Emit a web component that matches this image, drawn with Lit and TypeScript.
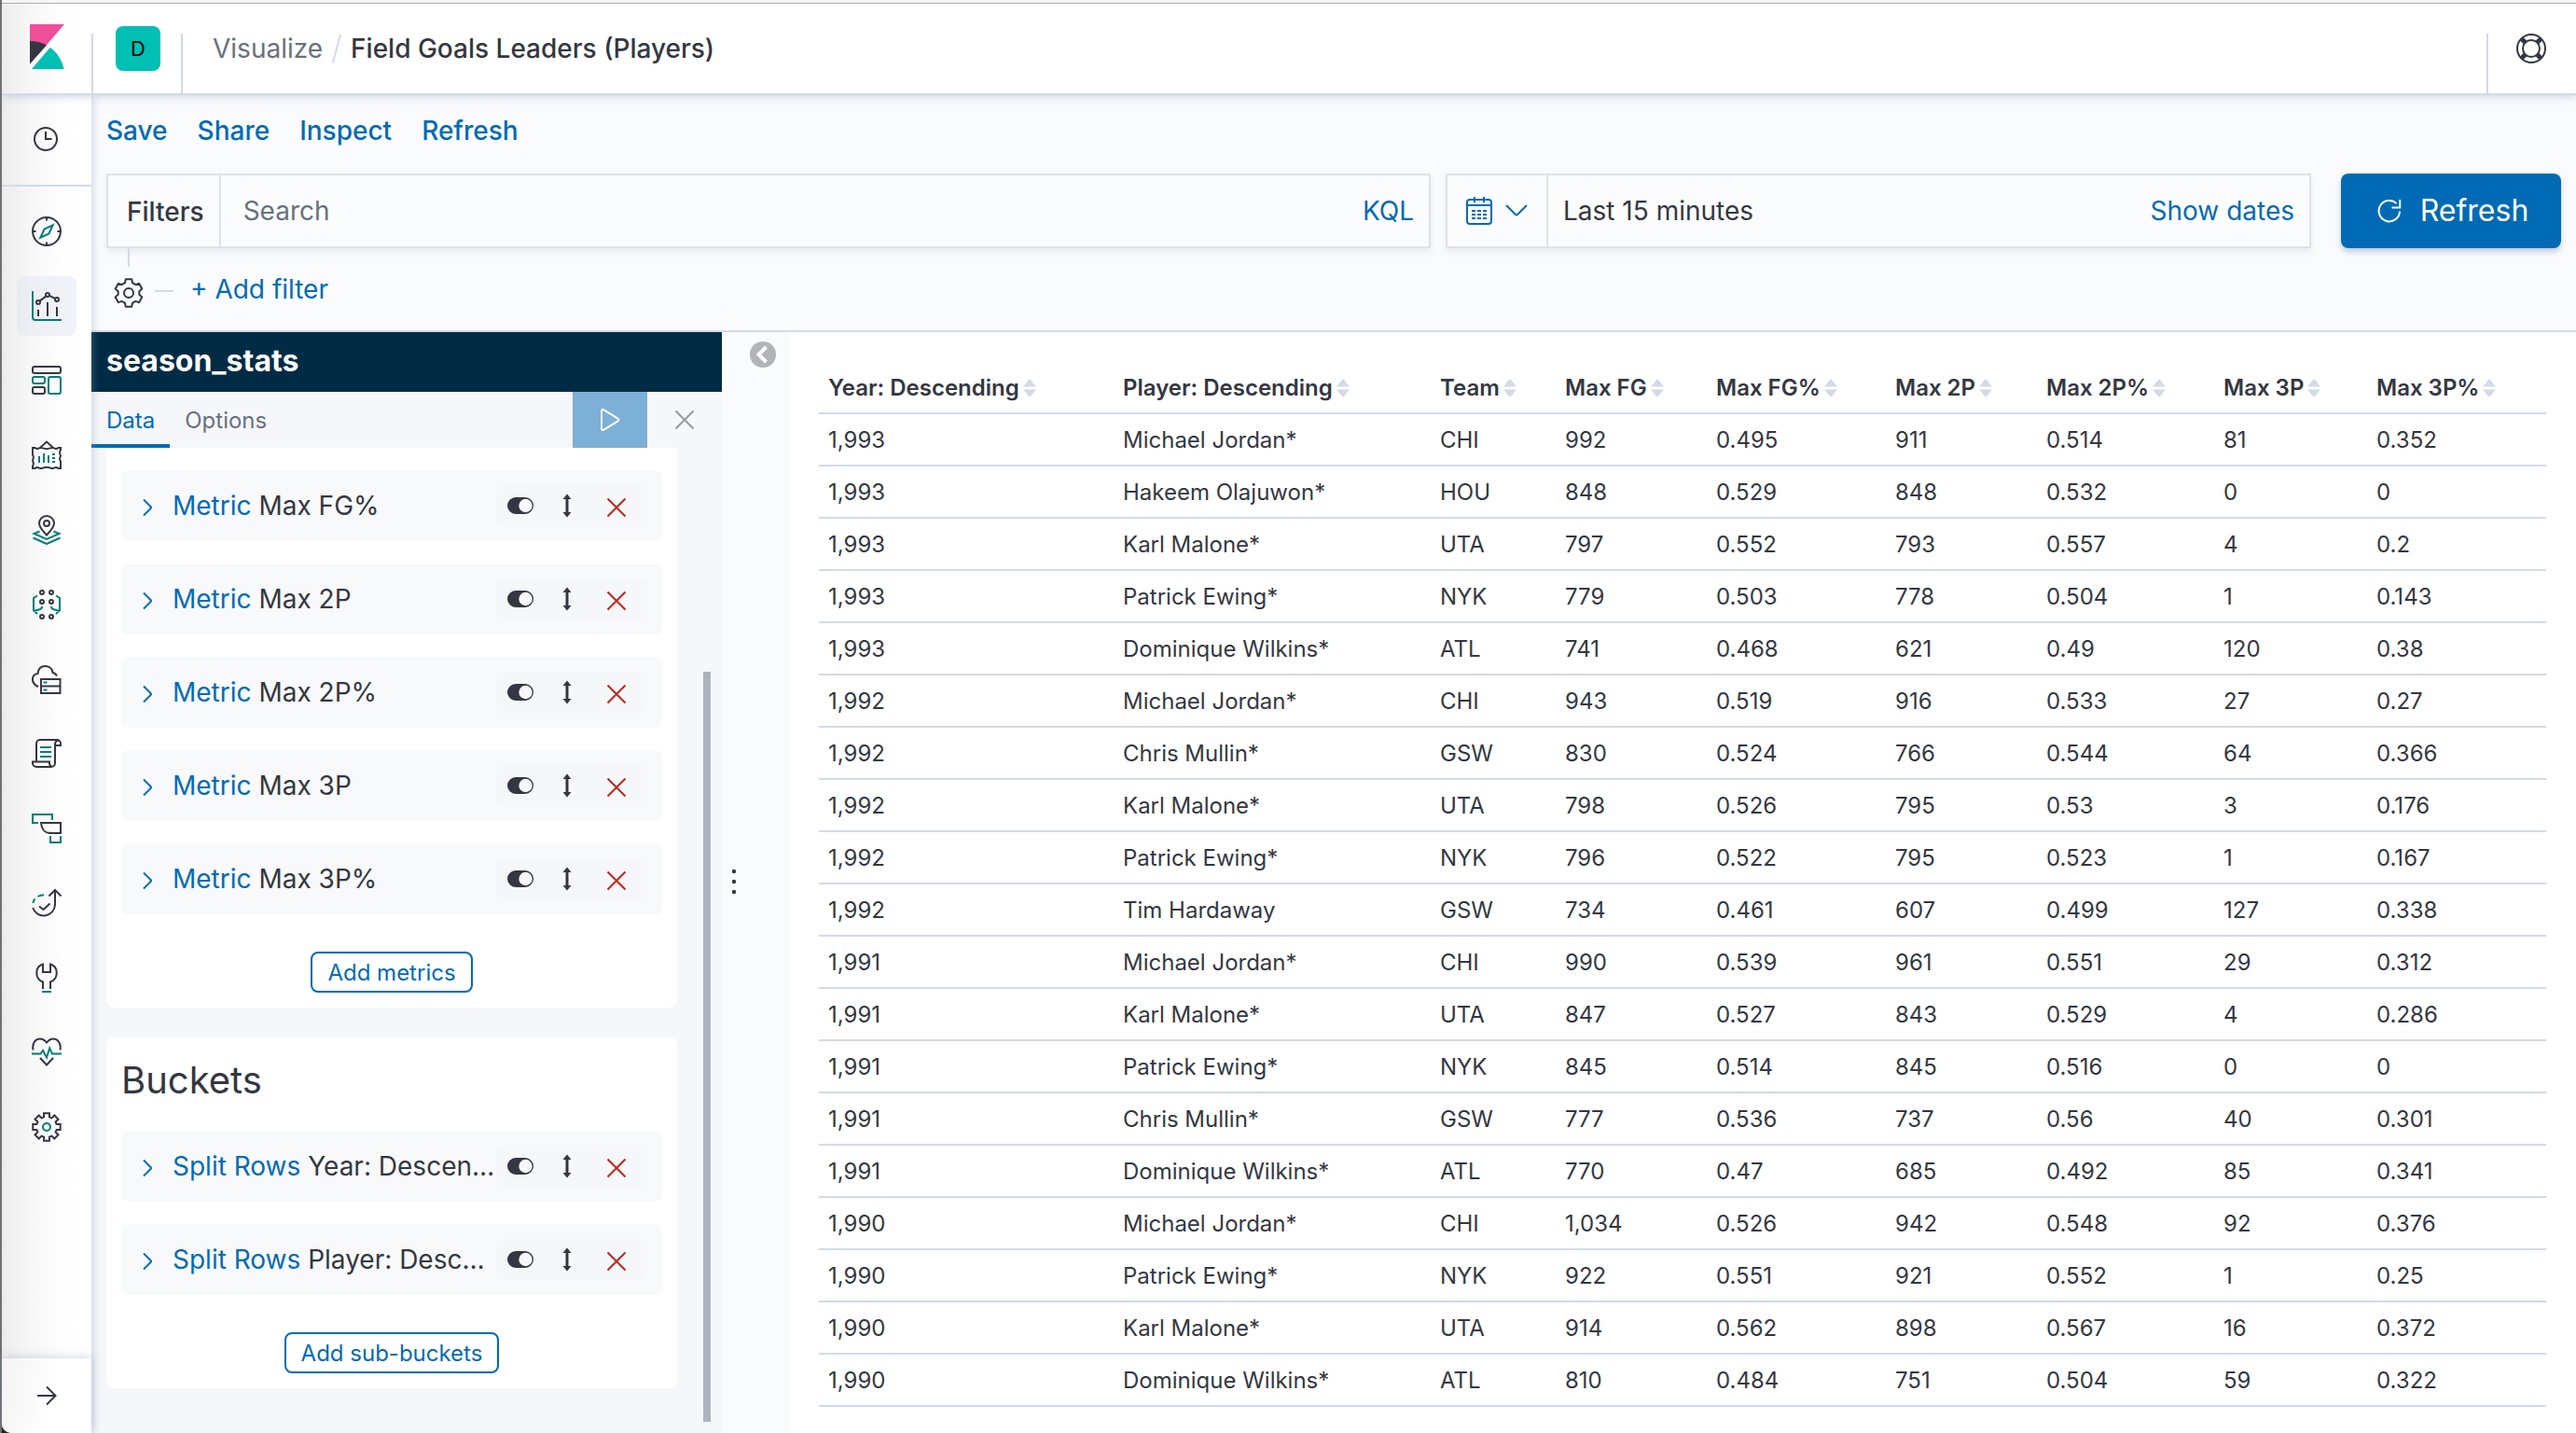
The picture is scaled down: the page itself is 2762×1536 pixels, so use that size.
import { LitElement, html, css, svg, nothing } from "lit";
import { customElement, property, state } from "lit/decorators.js";
import { classMap } from "lit/directives/class-map.js";

/** Outline of a cog: `teeth` blocks between an inner and an outer radius. */
function cog(teeth: number, c: number, outer: number, inner: number, top: number, foot: number): string {
  const points: string[] = [];
  const at = (r: number, a: number) =>
    `${(c + r * Math.sin(a)).toFixed(2)} ${(c - r * Math.cos(a)).toFixed(2)}`;
  for (let i = 0; i < teeth; i++) {
    const a = (i * 2 * Math.PI) / teeth;
    points.push(at(inner, a - foot), at(outer, a - top), at(outer, a + top), at(inner, a + foot));
  }
  return `M${points.join("L")}Z`;
}

const ink = "#343741";
const teal = "#017d73";

const icons: Record<string, { box: string; body: unknown }> = {
  kibana: {
    box: "0 0 37 48",
    body: svg`<g stroke="none"><path fill="#f04e98" d="M0 0h37L0 43z"/><path fill="#343741" d="M0 18c6.500 0 12.800 1.600 18 4.500L0 43z"/><path fill="#00bfb3" d="M21.700 25c7.500 5.300 13 13.500 14.800 23H2z"/><path stroke="#fbfbfb" stroke-width="2.500" d="M0 44.500 23 19"/></g>`,
  },
  clock: {
    box: "0 0 26 26",
    body: svg`<circle cx="13" cy="13" r="12"/><path d="M13 5v8h6.500"/>`,
  },
  discover: {
    box: "0 0 32 32",
    body: svg`<circle cx="16" cy="16" r="15"/><path d="M16 1v3.500M16 27.500V31M1 16h3.500M27.500 16H31"/><path stroke=${teal} d="M22.600 9.400 13.600 13.600 9.400 22.600 18.400 18.400z"/>`,
  },
  visualize: {
    box: "0 0 32 32",
    body: svg`<path stroke=${teal} d="M1 0v28a3 3 0 0 0 3 3h28"/><path d="M7 20v7M17 12v15M27 17v10M8.600 10.600l6.600-5M19 4.800l6.200 3.300"/><circle cx="7" cy="12" r="2"/><circle cx="17" cy="4" r="2"/><circle cx="27" cy="9" r="2"/>`,
  },
  dashboard: {
    box: "0 0 32 32",
    body: svg`<rect x="1" y="1" width="30" height="7" rx="2"/><rect x="1" y="23" width="13" height="7" rx="2"/><g stroke=${teal}><rect x="1" y="12" width="13" height="7" rx="2"/><rect x="18" y="12" width="13" height="18" rx="2"/></g>`,
  },
  canvas: {
    box: "0 0 32 32",
    body: svg`<path d="M9 8l7-6.500L23 8"/><path d="M1 8h2.500c1.500 1.200 3 1.200 4.500.4 1.400-.6 2.600-.6 4 0 2.700 1 5.300 1 8 0 1.400-.6 2.600-.6 4 0 1.500.8 3 .8 4.500-.4H31v2.500c-1.100 1.500-1.100 2.800-.5 4.300.5 1.100.5 2.300 0 3.400-.6 1.500-.6 2.800.5 4.300 .2 2.500 0 5 0 7.500h-2.500c-1.500-1.200-3-1.200-4.500-.4-1.400.6-2.600.6-4 0-2.700-1-5.300-1-8 0-1.400.6-2.600.6-4 0-1.500-.8-3-.8-4.500.4H1v-2.500c1.100-1.500 1.100-2.800.5-4.300-.5-1.100-.5-2.300 0-3.400.6-1.500.6-2.800-.5-4.300-.2-2.500 0-5 0-7.500z"/><path stroke=${teal} d="M8 17v7M13 14v10M18 16v8M22 15h3M22 19h3M22 23h3"/>`,
  },
  maps: {
    box: "0 0 32 32",
    body: svg`<path d="M16 21.500C12.500 17.500 8 13.500 8 9a8 8 0 0 1 16 0c0 4.500-4.500 8.500-8 12.500z"/><circle cx="16" cy="9" r="3"/><path stroke=${teal} d="M8.500 17.500 2.500 20 16 26l13.500-6-6-2.500M1.500 24.500 16 31l14.500-6.500"/>`,
  },
  ml: {
    box: "0 0 32 32",
    body: svg`<circle cx="11" cy="3" r="2"/><circle cx="21" cy="3" r="2"/><circle cx="11" cy="13" r="2"/><circle cx="21" cy="13" r="2"/><circle cx="11" cy="29" r="2"/><circle cx="21" cy="29" r="2"/><path stroke=${teal} d="M6 6.500 2 9v13l4 4M2 23l7-2c1.500-.5 2-1.300 2-3M26 6.500 30 9v13l-4 4M30 23l-7-2c-1.500-.5-2-1.300-2-3"/>`,
  },
  infra: {
    box: "0 0 32 32",
    body: svg`<path d="M7 24C-1.500 20-.5 11 6.500 10 7 4.500 10.500 2 14.500 2s7.500 2.500 8 7c2 .3 3.500 1.500 4.500 3.500"/><path d="M10 16h20.500v15H10zM10 23.500h20.500"/><path stroke=${teal} d="M12.500 19.500h4M12.500 27.500h4"/>`,
  },
  logs: {
    box: "0 0 32 32",
    body: svg`<path d="M5 24V5a4 4 0 0 1 4-4h18a4 4 0 0 1 4 4v2h-6"/><path d="M29 1.500a4 4 0 0 0-4 4V26a4 4 0 0 1-4 4H5a4 4 0 0 1-4-4v-1.500h18V26c0 2 1 3.500 3 4"/><path stroke=${teal} d="M9 9h12M9 14h12M9 19h12"/>`,
  },
  apm: {
    box: "0 0 32 32",
    body: svg`<path stroke=${teal} d="M7 10H1V1h21v6M20 24v7h11v-7"/><path d="M10 10h21v11H20c-6 0-9.500-4.500-10-11z"/>`,
  },
  uptime: {
    box: "0 0 32 32",
    body: svg`<path d="M1.200 21A12.200 12.200 0 0 0 25 18V2M18.500 8.500 25 2l6.500 6.500M8 19.500l4.500 3.500 7-6.500"/><path stroke=${teal} d="M1.300 16c.4-1.800 1.200-3.300 2.200-4.600M6.500 9c2-1.200 4-1.800 6.500-1.800"/>`,
  },
  dev: {
    box: "0 0 32 32",
    body: svg`<path d="M12 28v-7.500C3 17.500 3 4 12 1.500V10h8V1.500c9 2.500 9 16 0 19V28"/><path stroke=${teal} d="M11 31h10"/>`,
  },
  monitoring: {
    box: "0 0 32 32",
    body: svg`<path d="M1.500 13.500C0 5 5 1.500 9 1.500c3 0 5 1.500 7 4 2-2.500 4-4 7-4 4 0 9 3.500 7.500 12M9 22l7 7.500 7-7.500"/><path stroke=${teal} d="M0 17.500h9.500l2.500-3.500 4 7.500 3.200-10 2.800 6H32"/>`,
  },
  management: {
    box: "0 0 32 32",
    body: svg`<path d=${cog(8, 16, 15, 11, 0.2, 0.27)}/><circle stroke=${teal} cx="16" cy="16" r="4"/>`,
  },
  arrow: {
    box: "0 0 22 22",
    body: svg`<path d="M1 11h19M11 1.500l9.500 9.500L11 20.500"/>`,
  },
  help: {
    box: "0 0 32 32",
    body: svg`<circle cx="16" cy="16" r="15"/><circle cx="16" cy="16" r="9"/><path stroke-width="5" d="M5.800 5.800l4 4M26.200 5.800l-4 4M5.800 26.200l4-4M26.200 26.200l-4-4"/>`,
  },
  gear: {
    box: "0 0 32 32",
    body: svg`<path stroke-linejoin="round" d=${cog(6, 16, 15, 11.5, 0.22, 0.36)}/><circle cx="16" cy="16" r="5"/>`,
  },
  calendar: {
    box: "0 0 28 30",
    body: svg`<rect x="1" y="3" width="26" height="26" rx="3"/><path d="M1 9h26M9 0v6M19 0v6"/><path stroke-dasharray="4 2" d="M6 15h16M6 19h16M6 23h16"/>`,
  },
  down: { box: "0 0 24 24", body: svg`<path d="M1 6l10 10q1 1 2 0L23 6"/>` },
  right: { box: "0 0 24 24", body: svg`<path d="M9 5.500l7.500 7.500q1 1 0 2L9 22.500"/>` },
  reload: {
    box: "0 0 26 26",
    body: svg`<path d="M20.500 5A11.200 11.200 0 1 0 24 13.500M24.200 1v8.500h-8.700"/>`,
  },
  play: {
    box: "0 0 24 26",
    body: svg`<path stroke-linejoin="round" d="M3 3.500v19c0 1.500 1.300 2 2.500 1.200l15-9.300c1-.7 1-2 0-2.700l-15-9.400C4.300 1.500 3 2 3 3.500z"/>`,
  },
  cross: { box: "0 0 22 22", body: svg`<path d="M1.500 1.500l19 19M20.500 1.500l-19 19"/>` },
  toggle: {
    box: "0 0 28 18",
    body: svg`<rect x="1" y="1" width="26" height="16" rx="8" fill=${ink}/><circle cx="19.500" cy="9" r="7.200" fill="#f5f7fa" stroke="none"/>`,
  },
  updown: {
    box: "0 0 12 26",
    body: svg`<path stroke-width="3" d="M6 4v18"/><path stroke="none" fill="currentColor" d="M6 .5l4.500 5.500h-9zM6 25.500l4.500-5.500h-9z"/>`,
  },
  collapse: {
    box: "0 0 28 28",
    body: svg`<circle cx="14" cy="14" r="14" fill="#b2b4b8" stroke="none"/><path stroke="#fff" stroke-width="4" d="M17.500 6 9.500 14l8 8"/>`,
  },
  sort: {
    box: "0 0 14 20",
    body: svg`<path stroke="none" fill="#d3dae6" d="M7 0l7 8.500H0zM7 20l7-8.500H0z"/>`,
  },
  dots: {
    box: "0 0 6 28",
    body: svg`<g fill="currentColor" stroke="none"><circle cx="3" cy="3" r="2.200"/><circle cx="3" cy="14" r="2.200"/><circle cx="3" cy="25" r="2.200"/></g>`,
  },
};

const base = css`
  * {
    box-sizing: border-box;
  }
  button,
  input {
    font: inherit;
    color: inherit;
    background: none;
    border: 0;
    padding: 0;
    margin: 0;
    border-radius: 0;
    outline-offset: -2px;
  }
  button {
    cursor: pointer;
    display: flex;
    align-items: center;
    justify-content: center;
    white-space: nowrap;
  }
  a {
    color: inherit;
    text-decoration: none;
  }
`;

@customElement("k-icon")
class KIcon extends LitElement {
  @property() name = "";
  static styles = css`
    :host {
      display: inline-flex;
      flex: none;
    }
    .glyph {
      display: block;
      fill: none;
      stroke: currentColor;
      stroke-width: 2;
    }
  `;
  render() {
    const icon = icons[this.name];
    if (!icon) return nothing;
    const [, , w, h] = icon.box.split(" ");
    return html`<svg class="glyph" viewBox=${icon.box} width=${w} height=${h} aria-hidden="true">${icon.body}</svg>`;
  }
}

@customElement("k-rail")
class KRail extends LitElement {
  @state() active = "visualize";
  static styles = [
    base,
    css`
      :host {
        display: flex;
        flex-direction: column;
        position: relative;
        z-index: 1;
        color: #343741;
        background: linear-gradient(90deg, #ececec, #f6f6f6 28px, #fefefe 64px, #fff);
        box-shadow: 2px 0 8px rgba(130, 145, 175, 0.35);
        border-bottom-left-radius: 10px;
      }
      .recent {
        height: 98px;
        padding: 0 2px 2px 0;
        border-bottom: 2px solid #d3dae6;
      }
      .apps {
        display: flex;
        flex-direction: column;
        align-items: center;
        gap: 16px;
        padding: 16px 0;
      }
      .app {
        width: 64px;
        height: 64px;
        border-radius: 8px;
      }
      .app.active {
        background: rgba(225, 229, 242, 0.45);
      }
      .expand {
        height: 80px;
        margin-top: auto;
        background: linear-gradient(100deg, #f3f3f3, #fff 60px);
        box-shadow: 0 -2px 10px rgba(130, 145, 175, 0.3);
        border-bottom-left-radius: 10px;
      }
    `,
  ];
  render() {
    const apps = [
      ["discover", "Discover"],
      ["visualize", "Visualize"],
      ["dashboard", "Dashboard"],
      ["canvas", "Canvas"],
      ["maps", "Maps"],
      ["ml", "Machine Learning"],
      ["infra", "Infrastructure"],
      ["logs", "Logs"],
      ["apm", "APM"],
      ["uptime", "Uptime"],
      ["dev", "Dev Tools"],
      ["monitoring", "Stack Monitoring"],
      ["management", "Management"],
    ];
    return html`
      <button class="recent" aria-label="Recently viewed"><k-icon name="clock"></k-icon></button>
      <nav class="apps" aria-label="Applications">
        ${apps.map(
          ([id, label]) => html`<button
            class=${classMap({ app: true, active: id === this.active })}
            aria-label=${label}
            @click=${() => (this.active = id)}
          >
            <k-icon name=${id}></k-icon>
          </button>`,
        )}
      </nav>
      <button class="expand" aria-label="Expand navigation"><k-icon name="arrow"></k-icon></button>
    `;
  }
}

@customElement("k-agg")
class KAgg extends LitElement {
  @property() kind = "";
  @property() label = "";
  static styles = [
    base,
    css`
      :host {
        display: flex;
        align-items: center;
        height: 76px;
        padding: 0 16px 0 15px;
        border-radius: 8px;
        background: #f8f9fb;
      }
      .open {
        flex: 1;
        min-width: 0;
        justify-content: flex-start;
        gap: 16px;
        text-align: left;
      }
      .chevron {
        color: #006bb4;
      }
      .text {
        min-width: 0;
        overflow: hidden;
        text-overflow: ellipsis;
        line-height: 40px;
      }
      .kind {
        color: #006bb4;
      }
      .tools {
        display: flex;
        align-items: center;
        height: 44px;
        padding: 0 22px 0 12px;
        border-radius: 8px;
        background: #f5f7fa;
      }
      .order {
        padding: 0 36px 0 30px;
      }
      .remove {
        padding-top: 4px;
        color: #bd271e;
      }
    `,
  ];
  render() {
    return html`
      <button class="open" aria-expanded="false">
        <k-icon class="chevron" name="right"></k-icon>
        <span class="text"><span class="kind">${this.kind}</span> ${this.label}</span>
      </button>
      <div class="tools">
        <button aria-label="Disable aggregation"><k-icon name="toggle"></k-icon></button>
        <button class="order" aria-label="Change priority"><k-icon name="updown"></k-icon></button>
        <button class="remove" aria-label="Remove aggregation"><k-icon name="cross"></k-icon></button>
      </div>
    `;
  }
}

@customElement("k-editor")
class KEditor extends LitElement {
  static styles = [
    base,
    css`
      :host {
        display: flex;
        flex-direction: column;
        background: #f5f7fa;
      }
      .source {
        margin: 0;
        padding: 0 16px;
        background: #002b45;
        color: #fff;
        font-size: 32px;
        font-weight: 700;
        line-height: 62px;
        height: 64px;
      }
      .tabs {
        display: flex;
        height: 60px;
        font-size: 24px;
        color: #69707d;
      }
      .tab {
        padding: 2px 16px 0;
      }
      .tab.on {
        color: #006bb4;
        box-shadow: inset 0 -4px #006bb4;
      }
      .run {
        width: 80px;
        margin-left: auto;
        background: #7db0d7;
        color: #fff;
      }
      .discard {
        width: 80px;
        color: #98999c;
      }
      .scroll {
        flex: 1;
        display: flex;
        gap: 28px;
        padding: 0 12px 12px 16px;
      }
      .cards {
        flex: 1;
        min-width: 0;
        display: flex;
        flex-direction: column;
        gap: 32px;
      }
      .card {
        display: flex;
        flex-direction: column;
        gap: 24px;
        padding: 24px 16px 16px;
        background: #fff;
        border-radius: 8px;
      }
      .card.cut {
        border-radius: 0 0 8px 8px;
      }
      .heading {
        margin: 0 0 8px;
        font-size: 40px;
        font-weight: 400;
        line-height: 44px;
      }
      .add {
        align-self: center;
        height: 44px;
        margin-top: 16px;
        padding: 2px 16px 0;
        border: 2px solid #006bb4;
        border-radius: 8px;
        color: #006bb4;
        font-size: 24px;
      }
      .track {
        width: 8px;
        display: flex;
        flex-direction: column;
        justify-content: flex-end;
      }
      .thumb {
        height: 77%;
        background: #abb4bd;
      }
    `,
  ];
  render() {
    return html`
      <h2 class="source">season_stats</h2>
      <div class="tabs">
        <button class="tab on">Data</button>
        <button class="tab">Options</button>
        <button class="run" aria-label="Apply changes"><k-icon name="play"></k-icon></button>
        <button class="discard" aria-label="Discard changes"><k-icon name="cross"></k-icon></button>
      </div>
      <div class="scroll">
        <div class="cards">
          <section class="card cut" aria-label="Metrics">
            ${["Max FG%", "Max 2P", "Max 2P%", "Max 3P", "Max 3P%"].map(
              (m) => html`<k-agg kind="Metric" label=${m}></k-agg>`,
            )}
            <button class="add">Add metrics</button>
          </section>
          <section class="card">
            <h3 class="heading">Buckets</h3>
            <k-agg kind="Split Rows" label="Year: Descending"></k-agg>
            <k-agg kind="Split Rows" label="Player: Descending"></k-agg>
            <button class="add">Add sub-buckets</button>
          </section>
        </div>
        <div class="track"><div class="thumb"></div></div>
      </div>
    `;
  }
}

/** Column titles with their share of the table's width. */
const columns: [string, number][] = [
  ["Year: Descending", 316],
  ["Player: Descending", 340],
  ["Team", 134],
  ["Max FG", 162],
  ["Max FG%", 192],
  ["Max 2P", 162],
  ["Max 2P%", 190],
  ["Max 3P", 164],
  ["Max 3P%", 192],
];
const total = columns.reduce((sum, [, w]) => sum + w, 0);

const rows = `1,993|Michael Jordan*|CHI|992|0.495|911|0.514|81|0.352
1,993|Hakeem Olajuwon*|HOU|848|0.529|848|0.532|0|0
1,993|Karl Malone*|UTA|797|0.552|793|0.557|4|0.2
1,993|Patrick Ewing*|NYK|779|0.503|778|0.504|1|0.143
1,993|Dominique Wilkins*|ATL|741|0.468|621|0.49|120|0.38
1,992|Michael Jordan*|CHI|943|0.519|916|0.533|27|0.27
1,992|Chris Mullin*|GSW|830|0.524|766|0.544|64|0.366
1,992|Karl Malone*|UTA|798|0.526|795|0.53|3|0.176
1,992|Patrick Ewing*|NYK|796|0.522|795|0.523|1|0.167
1,992|Tim Hardaway|GSW|734|0.461|607|0.499|127|0.338
1,991|Michael Jordan*|CHI|990|0.539|961|0.551|29|0.312
1,991|Karl Malone*|UTA|847|0.527|843|0.529|4|0.286
1,991|Patrick Ewing*|NYK|845|0.514|845|0.516|0|0
1,991|Chris Mullin*|GSW|777|0.536|737|0.56|40|0.301
1,991|Dominique Wilkins*|ATL|770|0.47|685|0.492|85|0.341
1,990|Michael Jordan*|CHI|1,034|0.526|942|0.548|92|0.376
1,990|Patrick Ewing*|NYK|922|0.551|921|0.552|1|0.25
1,990|Karl Malone*|UTA|914|0.562|898|0.567|16|0.372
1,990|Dominique Wilkins*|ATL|810|0.484|751|0.504|59|0.322`
  .split("\n")
  .map((line) => line.split("|"));

@customElement("k-table")
class KTable extends LitElement {
  static styles = [
    base,
    css`
      :host {
        display: block;
        background: #fff;
        padding: 32px 32px 0;
      }
      .grid {
        width: 100%;
        table-layout: fixed;
        border-collapse: separate;
        border-spacing: 0;
        font-size: 24px;
        line-height: 36px;
      }
      .cell {
        height: 56px;
        padding: 2px 10px 0;
        border-bottom: 2px solid #d3dae6;
        text-align: left;
        white-space: nowrap;
        font-weight: 400;
      }
      .sort {
        gap: 4px;
        font-weight: 600;
      }
    `,
  ];
  render() {
    return html`<table class="grid">
      <colgroup>
        ${columns.map(([, w]) => html`<col style="width:${(w / total) * 100}%" />`)}
      </colgroup>
      <thead>
        <tr>
          ${columns.map(
            ([title]) => html`<th class="cell" scope="col">
              <button class="sort">${title}<k-icon name="sort"></k-icon></button>
            </th>`,
          )}
        </tr>
      </thead>
      <tbody>
        ${rows.map((r) => html`<tr>${r.map((v) => html`<td class="cell">${v}</td>`)}</tr>`)}
      </tbody>
    </table>`;
  }
}

@customElement("app-root")
class AppRoot extends LitElement {
  static styles = [
    base,
    css`
      :host {
        display: flex;
        flex-direction: column;
        min-height: 100vh;
        box-sizing: border-box;
        border-left: 2px solid #6e6e6e;
        background: #fafbfd;
        color: #343741;
        font-family: Inter, "Liberation Sans", sans-serif;
        font-size: 28px;
        line-height: 40px;
      }
      .edge {
        height: 4px;
        background: #fafafa;
        border-bottom: 1px solid #b4b4b4;
      }
      .header {
        display: flex;
        align-items: center;
        height: 98px;
        background: #fff;
        border-bottom: 2px solid #d3dae6;
        box-shadow: 0 2px 8px rgba(130, 145, 175, 0.35);
        position: relative;
        z-index: 2;
      }
      .home {
        width: 96px;
        height: 96px;
        display: flex;
        align-items: center;
        padding: 0 0 4px 30px;
        background: linear-gradient(90deg, #ececec, #f6f6f6 28px, #fefefe 64px, #fff);
      }
      .rule {
        width: 2px;
        height: 64px;
        align-self: flex-end;
        background: #d3dae6;
      }
      .space {
        width: 48px;
        height: 48px;
        margin: 0 22px 0 24px;
        border-radius: 8px;
        background: #00bfb3;
        color: #000;
        font-size: 22px;
      }
      .crumbs {
        display: flex;
        align-items: center;
        gap: 10px;
        padding: 0 32px;
        white-space: nowrap;
      }
      .parent {
        color: #69707d;
      }
      .slash {
        width: 2px;
        height: 32px;
        margin: 0 4px;
        background: #d3dae6;
        transform: rotate(15deg);
      }
      .title {
        margin: 0;
        font-size: 28px;
        font-weight: 500;
      }
      .end {
        margin-left: auto;
      }
      .help {
        width: 94px;
        height: 96px;
        padding-right: 2px;
      }
      .body {
        flex: 1;
        display: grid;
        grid-template-columns: 96px minmax(0, 1fr);
        background: #1e120a;
      }
      .main {
        display: flex;
        flex-direction: column;
        background: #fafbfd;
      }
      .menu {
        display: flex;
        align-items: center;
        gap: 32px;
        height: 76px;
        margin-bottom: 8px;
        padding: 0 16px;
        color: #006bb4;
        font-weight: 500;
      }
      .query {
        display: grid;
        grid-template-columns: minmax(0, 1420fr) minmax(0, 928fr) 252px;
        gap: 16px;
        height: 80px;
        padding: 0 16px;
      }
      .field {
        display: flex;
        background: #fbfcfd;
        border: 2px solid #e0e2e6;
        box-shadow: 0 4px 6px rgba(130, 145, 175, 0.15);
      }
      .filters {
        padding: 2px 16px 0 20px;
        border-right: 2px solid #e0e2e6;
        font-weight: 500;
      }
      .search {
        flex: 1;
        min-width: 0;
        padding: 0 24px;
      }
      .search::placeholder {
        color: #69707d;
        opacity: 1;
      }
      .link {
        padding: 0 16px;
        color: #006bb4;
      }
      .quick {
        gap: 14px;
        padding: 0 20px;
        border-right: 2px solid #e0e2e6;
        color: #006bb4;
      }
      .range {
        flex: 1;
        justify-content: flex-start;
        padding: 0 16px;
      }
      .refresh {
        gap: 20px;
        margin-left: 16px;
        padding-left: 4px;
        border-radius: 8px;
        background: #006bb4;
        color: #fff;
        font-size: 32px;
        box-shadow: 0 4px 6px rgba(60, 100, 150, 0.3);
      }
      .filterbar {
        display: flex;
        align-items: center;
        height: 90px;
        padding: 0 24px;
        border-bottom: 2px solid #d3dae6;
      }
      .branch {
        display: flex;
        flex-direction: column;
        align-items: center;
        align-self: flex-start;
        gap: 12px;
      }
      .stem {
        width: 2px;
        height: 20px;
        background: #d3dae6;
      }
      .dash {
        width: 20px;
        height: 2px;
        margin: 4px 18px 0 12px;
        background: #d3dae6;
      }
      .addfilter {
        color: #006bb4;
      }
      .work {
        flex: 1;
        display: grid;
        grid-template-columns: 676px 72px minmax(0, 1fr);
      }
      .gutter {
        display: grid;
        padding: 10px 14px 12px 10px;
      }
      .fold,
      .resize {
        grid-area: 1 / 1;
      }
      .fold {
        align-self: start;
        justify-self: end;
      }
      .resize {
        align-self: center;
        justify-self: start;
      }
    `,
  ];
  render() {
    return html`
      <div class="edge"></div>
      <header class="header">
        <a class="home" href="#" aria-label="Kibana home"><k-icon name="kibana"></k-icon></a>
        <span class="rule"></span>
        <button class="space" aria-label="Default space">D</button>
        <span class="rule"></span>
        <nav class="crumbs" aria-label="Breadcrumbs">
          <a class="parent" href="#visualize">Visualize</a>
          <span class="slash"></span>
          <h1 class="title">Field Goals Leaders (Players)</h1>
        </nav>
        <span class="rule end"></span>
        <button class="help" aria-label="Help"><k-icon name="help"></k-icon></button>
      </header>
      <div class="body">
        <k-rail></k-rail>
        <main class="main">
          <div class="menu">
            ${["Save", "Share", "Inspect", "Refresh"].map((t) => html`<button>${t}</button>`)}
          </div>
          <div class="query">
            <div class="field">
              <button class="filters">Filters</button>
              <input class="search" type="text" placeholder="Search" aria-label="Search" />
              <button class="link">KQL</button>
            </div>
            <div class="field">
              <button class="quick" aria-label="Quick select">
                <k-icon name="calendar"></k-icon><k-icon name="down"></k-icon>
              </button>
              <button class="range">Last 15 minutes</button>
              <button class="link">Show dates</button>
            </div>
            <button class="refresh"><k-icon name="reload"></k-icon>Refresh</button>
          </div>
          <div class="filterbar">
            <div class="branch">
              <span class="stem"></span>
              <button aria-label="Filter options"><k-icon name="gear"></k-icon></button>
            </div>
            <span class="dash"></span>
            <button class="addfilter">+ Add filter</button>
          </div>
          <div class="work">
            <k-editor></k-editor>
            <div class="gutter">
              <button class="fold" aria-label="Collapse editor"><k-icon name="collapse"></k-icon></button>
              <button class="resize" aria-label="Resize editor"><k-icon name="dots"></k-icon></button>
            </div>
            <k-table></k-table>
          </div>
        </main>
      </div>
    `;
  }
}
